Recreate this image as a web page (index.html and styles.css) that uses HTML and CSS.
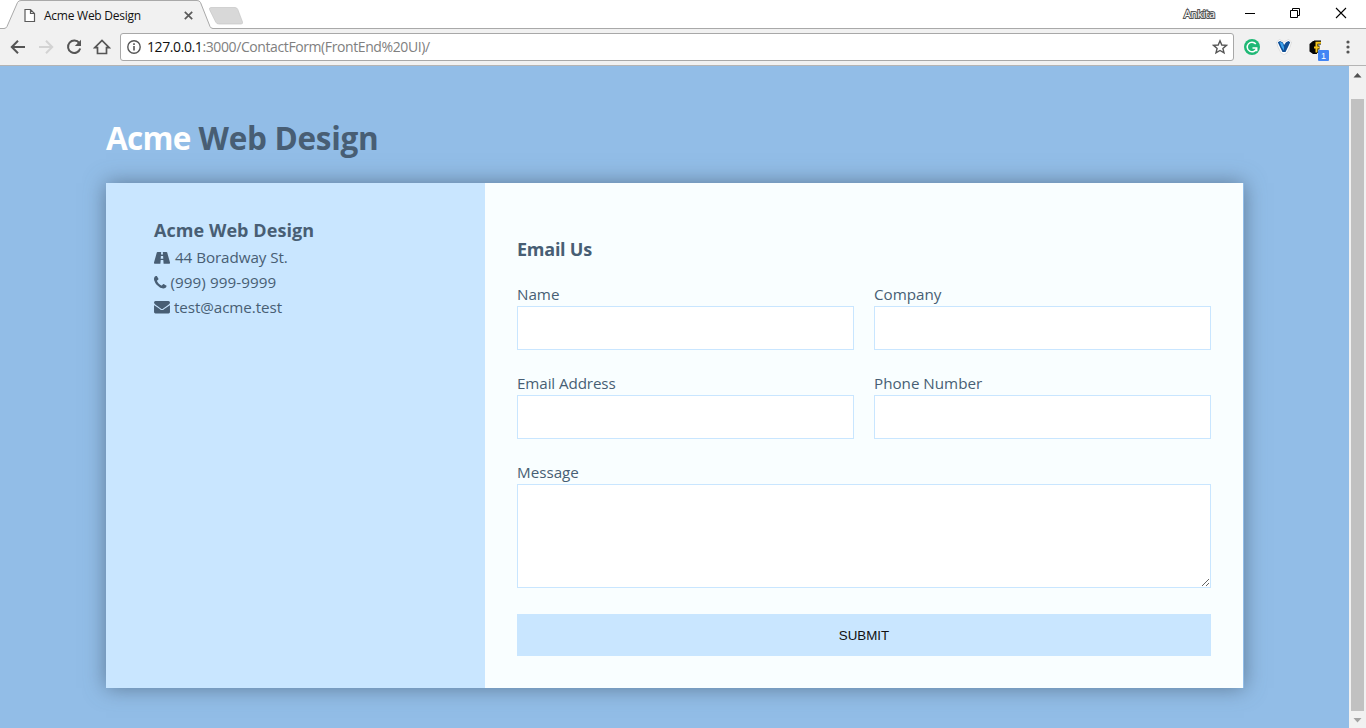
FILE: index.html
```html
<!DOCTYPE html>
<html lang="en">
<head>
<meta charset="utf-8">
<title>Acme Web Design</title>
<link rel="stylesheet" href="styles.css">
</head>
<body>
<div class="browser">
  <div class="tabstrip">
    <svg class="tab-shape" width="250" height="29" viewBox="0 0 250 29">
      <path d="M0 28.5H4Q6 28.5 7 26.5L17.500 2.500Q18.500 .5 21 .5H197Q199.500 .5 200.500 2.500L210 26.500Q211 28.500 213 28.500H250V29H0Z" fill="#f1f1f1"/>
      <path d="M0 28.500H4Q6 28.500 7 26.500L17.500 2.500Q18.500 .5 21 .5H197Q199.500 .5 200.500 2.500L210 26.500Q211 28.500 213 28.500H250" fill="none" stroke="#a9a9a9"/>
      <path d="M211 7.500H235Q237 7.500 237.800 9.500L242.500 22Q243 24 241 24H219Q216.500 24 215.700 22L209.500 9.500Q209 7.500 211 7.500Z" fill="#d8d8d8" stroke="#c6c6c6" stroke-width=".7"/>
    </svg>
    <div class="tab">
      <svg width="12" height="15" viewBox="0 0 12 15"><path d="M1 1.500H6.500L10.500 5.500V13.500H1ZM6.500 1.500V5.500H10.500" fill="#fff" stroke="#5a5a5a" stroke-width="1.200"/></svg>
      <span class="tab-title">Acme Web Design</span>
      <svg class="tab-close" width="9" height="9" viewBox="0 0 9 9"><path d="M.8.8L8.200 8.200M8.200.8L.8 8.200" stroke="#5a5a5a" stroke-width="1.700"/></svg>
    </div>
    <div class="window-controls">
      <span class="profile">Ankita</span>
      <svg width="12" height="12" viewBox="0 0 12 12"><path d="M2 6.500H12" stroke="#000"/></svg>
      <svg width="12" height="12" viewBox="0 0 12 12"><path d="M1.500 3.500H8.500V10.500H1.500ZM3.500 3.500V1.500H10.500V8.500H8.500" fill="none" stroke="#000"/></svg>
      <svg width="12" height="12" viewBox="0 0 12 12"><path d="M1 1L11 11M11 1L1 11" stroke="#000" stroke-width="1.100"/></svg>
    </div>
  </div>
  <div class="toolbar">
    <svg width="16" height="16" viewBox="0 0 16 16"><path d="M15 8H2.500M8 1.800L1.800 8L8 14.200" fill="none" stroke="#555" stroke-width="2"/></svg>
    <svg width="16" height="16" viewBox="0 0 16 16"><path d="M1 8H13.500M8 1.800L14.200 8L8 14.200" fill="none" stroke="#d3d3d3" stroke-width="2"/></svg>
    <svg width="16" height="16" viewBox="0 0 16 16"><path d="M13.300 4.200A6.200 6.200 0 1 0 14.200 9.500" fill="none" stroke="#555" stroke-width="2"/><path d="M15 .8V7H8.800Z" fill="#555"/></svg>
    <svg class="home" width="18" height="16" viewBox="0 0 18 16"><path d="M1.800 8.700L9 1.500L16.200 8.700H13.500V14.500H4.500V8.700Z" fill="none" stroke="#555" stroke-width="1.700"/></svg>
    <div class="address">
      <svg width="14" height="14" viewBox="0 0 14 14"><circle cx="7" cy="7" r="6.200" fill="none" stroke="#555" stroke-width="1.400"/><path d="M7 6V10.500M7 3.300V5" stroke="#555" stroke-width="1.600"/></svg>
      <span class="url"><b>127.0.0.1</b>:3000/ContactForm(FrontEnd%20UI)/</span>
      <svg width="16" height="16" viewBox="0 0 16 16"><path d="M8 1.800L9.800 6L14.400 6.400L10.900 9.400L12 13.900L8 11.500L4 13.900L5.100 9.400L1.600 6.400L6.200 6Z" fill="none" stroke="#555" stroke-width="1.400"/></svg>
    </div>
    <div class="extensions">
      <svg width="16" height="16" viewBox="0 0 16 16"><circle cx="8" cy="8" r="8" fill="#1fb875"/><path d="M11.800 5A4.800 4.800 0 1 0 12.600 9.500M8.500 9H12.700V12.200" fill="none" stroke="#fff" stroke-width="1.500"/></svg>
      <svg width="18" height="18" viewBox="0 0 18 18"><path d="M1.500 4L4.500 1.500L9 4L13.500 1.500L16.500 4L15 9L12 15L9 16.500L6 15L3 9Z" fill="#fff" stroke="#d2d2d2" stroke-width=".7"/><path d="M2.800 4.200L5 3L8 4.500L9 7L11 4.200L13.500 3L15.200 4.200L13.500 8L10.500 14H7.500L4.500 8Z" fill="#104f96"/><path d="M4.500 3.800L7.500 5L9 9V12.500L6.500 9Z" fill="#3ba2ee"/></svg>
      <svg width="22" height="29" viewBox="0 0 22 29"><path d="M5 8H9V21H5L1.500 18.500V11Z" fill="#050505"/><path d="M13 9.500H8V20M5.500 14.500H11.500" fill="none" stroke="#050505" stroke-width="4"/><path d="M13 9.800H8.500V19.500M6 14.500H11.500" fill="none" stroke="#f4c51d" stroke-width="2"/><rect x="10" y="17" width="11" height="11" rx="1" fill="#4285f4"/><text x="15.500" y="26" class="ext-count">1</text></svg>
      <svg class="menu" width="4" height="14" viewBox="0 0 4 14"><g fill="#555"><circle cx="2" cy="2" r="1.600"/><circle cx="2" cy="7" r="1.600"/><circle cx="2" cy="12" r="1.600"/></g></svg>
    </div>
  </div>
  <div class="viewport">
    <main class="page">
      <h1 class="brand"><span class="brand-accent">Acme</span> Web Design</h1>
      <div class="card">
        <section class="company-info">
          <h3 class="company-name">Acme Web Design</h3>
          <ul class="details">
            <li class="address-line"><svg width="16" height="12" viewBox="0 0 16 12"><path fill="#485e74" fill-rule="evenodd" d="M3.500 0H7.200L7 2.500H9L8.800 0H12.500Q13 0 13.200.6L16 10.600Q16.200 11.800 15.300 11.800H9.600L9.300 8H6.700L6.400 11.800H.7Q-.2 11.800 0 10.600L2.800.6Q3 0 3.500 0ZM6.900 4L6.700 6.700H9.300L9.100 4Z"/></svg><span>44 Boradway St.</span></li>
            <li class="phone-line"><svg width="12.500" height="12.500" viewBox="0 128 1408 1408"><path fill="#485e74" d="M1408 1240q0 27-10 70.500t-21 68.500q-21 50-122 106-94 51-186 51-27 0-53-3.500t-57.500-12.500-47-14.500-55.500-20.500-49-18q-98-35-175-83-127-79-264-216t-216-264q-48-77-83-175-3-9-18-49t-20.500-55.500-14.500-47-12.500-57.500-3.500-53q0-92 51-186 56-101 106-122 25-11 68.500-21t70.500-10q14 0 21 3 18 6 53 76 11 19 30 54t35 63.500 31 53.500q3 4 17.500 25t21.500 35.500 7 28.500q0 20-28.500 50t-62 55-62 53-28.500 46q0 9 5 22.500t8.500 20.500 14 24 11.500 19q76 137 174 235t235 174q2 1 19 11.500t24 14 20.500 8.500 22.500 5q18 0 46-28.500t53-62 55-62 50-28.500q14 0 28.500 7t35.500 21.500 25 17.500q25 15 53.500 31t63.500 35 54 30q70 35 76 53 3 7 3 21z"/></svg><span>(999) 999-9999</span></li>
            <li class="mail-line"><svg width="16" height="12.500" viewBox="0 256 1792 1408"><path fill="#485e74" d="M1792 710v794q0 66-47 113t-113 47h-1472q-66 0-113-47t-47-113v-794q44 49 101 87 362 246 497 345 57 42 92.500 65.500t94.500 48 110 24.500h2q51 0 110-24.500t94.500-48 92.500-65.500q170-123 498-345 57-39 100-87zm0-294q0 79-49 151t-122 123q-376 261-468 325-10 7-42.500 31t-54 38.500-52 32.500-57.500 27-50 9h-2q-23 0-50-9t-57.500-27-52-32.500-54-38.500-42.500-31q-91-64-262-182.500t-205-142.500q-62-42-117-115.500t-55-136.500q0-78 41.500-130t118.500-52h1472q65 0 112.500 47t47.500 113z"/></svg><span>test@acme.test</span></li>
          </ul>
        </section>
        <section class="contact">
          <h3 class="form-title">Email Us</h3>
          <form class="form">
            <div class="field"><label class="l-name" for="name">Name</label><input id="name" type="text"></div>
            <div class="field"><label class="l-company" for="company">Company</label><input id="company" type="text"></div>
            <div class="field"><label class="l-email" for="email">Email Address</label><input id="email" type="email"></div>
            <div class="field"><label class="l-phone" for="phone">Phone Number</label><input id="phone" type="text"></div>
            <div class="field full"><label class="l-message" for="message">Message</label><textarea id="message"></textarea></div>
            <button class="submit full" type="button">SUBMIT</button>
          </form>
        </section>
      </div>
    </main>
    <div class="scrollbar">
      <svg width="9" height="5" viewBox="0 0 9 5"><path d="M4.500 0L8.500 4.500H.5Z" fill="#505050"/></svg>
      <div class="thumb"></div>
      <svg width="9" height="5" viewBox="0 0 9 5"><path d="M4.500 4.500L8.500 0H.5Z" fill="#a3a3a3"/></svg>
    </div>
  </div>
</div>
</body>
</html>
```
FILE: styles.css
```css
* { box-sizing: border-box; }
body { margin: 0; overflow: hidden; font-family: "Open Sans", "Noto Sans", sans-serif; }
svg { display: block; flex: none; }
.browser { width: 1366px; height: 728px; display: flex; flex-direction: column; }

.tabstrip { position: relative; height: 29px; flex: none; display: flex; justify-content: space-between; background: #fff; border-bottom: 1px solid #a9a9a9; }
.tab-shape { position: absolute; left: 0; top: 0; }
.tab { position: relative; display: flex; align-items: center; width: 193px; height: 28px; padding: 2px 0 0 24px; }
.tab-title { margin-left: 8px; font-size: 12px; letter-spacing: -.25px; color: #111; white-space: nowrap; }
.tab-close { margin-left: auto; }
.window-controls { display: flex; align-items: center; gap: 34px; padding: 0 19px 2px 0; }
.profile { margin-right: -6px; font-size: 11px; letter-spacing: -.2px; color: #fff; -webkit-text-stroke: 2px #555; paint-order: stroke fill; }

.toolbar { height: 37px; flex: none; display: flex; align-items: center; padding: 0 16px 0 10px; background: #f1f1f1; border-bottom: 1px solid #b4b4b4; gap: 12px; }
.home { margin-left: -1px; }
.address { display: flex; align-items: center; width: 1114px; height: 28px; margin-left: -3px; padding: 0 5px 0 6px; background: #fff; border: 1px solid #a8a8a8; border-radius: 3px; flex: none; }
.url { flex: 1; margin: -1px 0 0 6px; font-size: 14px; letter-spacing: -.4px; color: #808080; white-space: nowrap; }
.url b { font-weight: 400; color: #111; }
.extensions { display: flex; align-items: center; gap: 15px; margin-left: -2px; }
.ext-count { font: 9px "Liberation Sans", sans-serif; fill: #fff; text-anchor: middle; }
.menu { margin-left: 1px; }

.viewport { flex: 1; min-height: 0; display: flex; background: #92bde7; color: #485e74; }
.page { flex: 1; padding: 48px 105px 0 106px; }
.brand { margin: 0; height: 69px; font-size: 31.5px; line-height: 48px; font-weight: 700; letter-spacing: -.3px; white-space: nowrap; }
.brand-accent { letter-spacing: -.7px; }
.brand-accent { color: #fff; }
.card { display: grid; grid-template-columns: 379px 758px; width: 1138px; height: 505px; border-right: 1px solid #92bde7; box-shadow: 0 0 20px 0 rgba(72, 94, 116, .7); }
.company-info { padding: 33px 48px; background: #c9e6ff; }
.company-name { margin: 0 0 1px; font-size: 18px; line-height: 28px; letter-spacing: .06px; white-space: nowrap; }
.details { margin: 0; padding: 0; list-style: none; font-size: 15.2px; line-height: 25px; }
.details li { display: flex; align-items: center; height: 25px; gap: 4px; white-space: nowrap; }
.details .address-line { gap: 5px; letter-spacing: -.06px; }
.details .phone-line { letter-spacing: .08px; }
.details .mail-line { letter-spacing: -.08px; }
.contact { padding: 52px 32px 0; background: #f9feff; }
.form-title { margin: 0 0 21px; font-size: 18px; line-height: 28px; letter-spacing: -.25px; }
.form { display: grid; grid-template-columns: 337px 337px; column-gap: 20px; row-gap: 23px; }
.field { display: flex; flex-direction: column; }
.full { grid-column: 1 / -1; }
.field label { height: 22px; font-size: 15.2px; line-height: 21px; white-space: nowrap; }
.field .l-email { letter-spacing: -.1px; }
.field input { width: 100%; height: 44px; padding: 12px; background: #fff; border: 1px solid #c9e6ff; border-radius: 0; }
.field textarea { display: block; width: 100%; height: 104px; padding: 12px; background: #fff; border: 1px solid #c9e6ff; border-radius: 0; resize: vertical; }
.submit { height: 42px; margin-top: 3px; padding: 0; border: 0; background: #c9e6ff; color: #111; font: 13.333px "Liberation Sans", sans-serif; }

.scrollbar { width: 17px; display: flex; flex-direction: column; align-items: center; padding: 7px 0 5px; background: #f1f1f1; }
.thumb { width: 13px; height: 612px; margin: 21px 0 auto; background: #c1c1c1; }
```
